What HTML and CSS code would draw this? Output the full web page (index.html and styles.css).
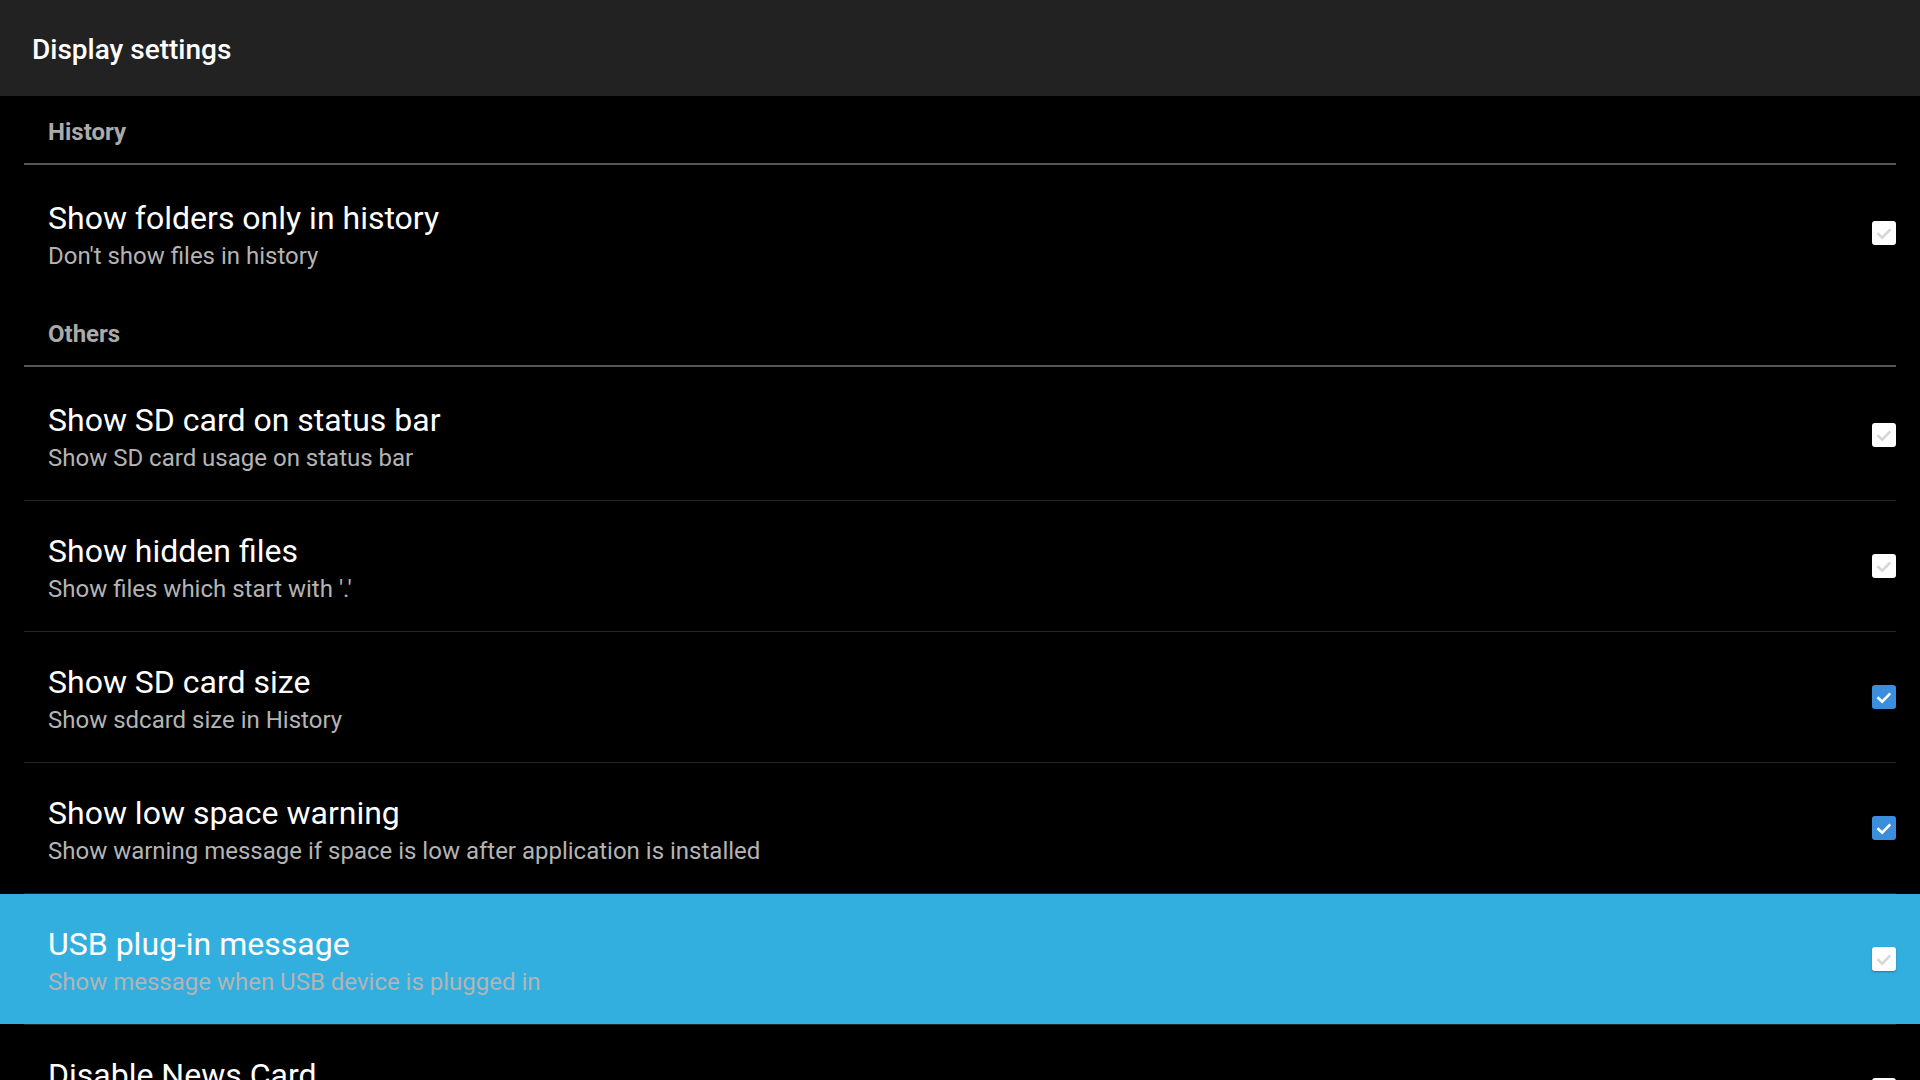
FILE: index.html
```html
<!DOCTYPE html>
<html lang="en">
<head>
  <meta charset="UTF-8">
  <title>Display settings</title>
  <link rel="stylesheet" href="styles.css">
</head>
<body>

<div class="toolbar">Display settings</div>

<div class="prefs">
  <div class="category">History</div>
  <div class="pref last">
    <div class="pref-text">
      <div class="pref-title">Show folders only in history</div>
      <div class="pref-summary">Don't show files in history</div>
    </div>
    <span class="check">
      <svg viewBox="0 0 24 24"><path d="M5.5 12.3 L10.2 16.6 L18.3 8.4"/></svg>
    </span>
  </div>

  <div class="category">Others</div>
  <div class="pref">
    <div class="pref-text">
      <div class="pref-title">Show SD card on status bar</div>
      <div class="pref-summary">Show SD card usage on status bar</div>
    </div>
    <span class="check">
      <svg viewBox="0 0 24 24"><path d="M5.5 12.3 L10.2 16.6 L18.3 8.4"/></svg>
    </span>
  </div>
  <div class="pref">
    <div class="pref-text">
      <div class="pref-title">Show hidden files</div>
      <div class="pref-summary">Show files which start with '.'</div>
    </div>
    <span class="check">
      <svg viewBox="0 0 24 24"><path d="M5.5 12.3 L10.2 16.6 L18.3 8.4"/></svg>
    </span>
  </div>
  <div class="pref">
    <div class="pref-text">
      <div class="pref-title">Show SD card size</div>
      <div class="pref-summary">Show sdcard size in History</div>
    </div>
    <span class="check checked">
      <svg viewBox="0 0 24 24"><path d="M5.5 12.3 L10.2 16.6 L18.3 8.4"/></svg>
    </span>
  </div>
  <div class="pref">
    <div class="pref-text">
      <div class="pref-title">Show low space warning</div>
      <div class="pref-summary">Show warning message if space is low after application is installed</div>
    </div>
    <span class="check checked">
      <svg viewBox="0 0 24 24"><path d="M5.5 12.3 L10.2 16.6 L18.3 8.4"/></svg>
    </span>
  </div>
  <div class="pref focused">
    <div class="pref-text">
      <div class="pref-title">USB plug-in message</div>
      <div class="pref-summary">Show message when USB device is plugged in</div>
    </div>
    <span class="check">
      <svg viewBox="0 0 24 24"><path d="M5.5 12.3 L10.2 16.6 L18.3 8.4"/></svg>
    </span>
  </div>
  <div class="pref">
    <div class="pref-text">
      <div class="pref-title">Disable News Card</div>
      <div class="pref-summary">&nbsp;</div>
    </div>
    <span class="check">
      <svg viewBox="0 0 24 24"><path d="M5.5 12.3 L10.2 16.6 L18.3 8.4"/></svg>
    </span>
  </div>
</div>

</body>
</html>
```

FILE: styles.css
```css
body {
  margin: 0;
  background: #000;
  color: #fff;
  font-family: Roboto, 'Noto Sans', sans-serif;
  height: 1080px;
  overflow: hidden;
}

.toolbar {
  height: 96px;
  box-sizing: border-box;
  padding: 3px 0 0 32px;
  display: flex;
  align-items: center;
  background: #222;
  font-size: 28px;
  font-weight: 500;
}

.category {
  margin: 0 24px 3px;
  padding: 22px 24px 17px;
  line-height: 28px;
  font-size: 24px;
  font-weight: bold;
  color: #aaa;
  border-bottom: 2px solid #555;
}

.pref {
  position: relative;
  display: flex;
  align-items: center;
  height: 130px;
  padding: 0 24px 0 48px;
}

/* thin divider between rows, inset like the category line */
.pref::after {
  content: '';
  position: absolute;
  left: 24px;
  right: 24px;
  bottom: -1px;
  height: 1px;
  background: #262626;
}

.pref + .pref {
  margin-top: 1px;
}

.pref.last::after {
  display: none;
}

.pref.focused {
  background: #33afdf;
}

.pref-text {
  flex: 1;
  padding-top: 5px;
}

.pref-title {
  font-size: 32px;
  line-height: 40px;
}

.pref-summary {
  font-size: 24px;
  line-height: 36px;
  color: #b4b4b4;
}

.check {
  width: 24px;
  height: 24px;
  border-radius: 3px;
  background: #fff;
  display: flex;
}

.check svg {
  width: 24px;
  height: 24px;
  fill: none;
  stroke: #d6d6d6;
  stroke-width: 2.6;
}

.check.checked {
  background: #3b8edd;
}

.check.checked svg {
  stroke: #fff;
}

.focused .check {
  box-shadow: 0 1px 2px rgba(0,0,0,0.3);
}
```
